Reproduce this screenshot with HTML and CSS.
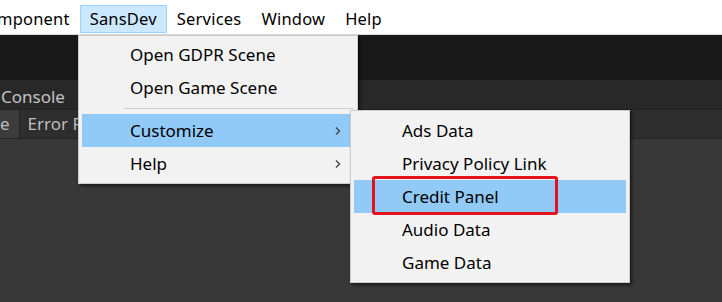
FILE: index.html
```html
<!DOCTYPE html>
<html lang="en">
<head>
    <meta charset="UTF-8">
    <meta name="viewport" content="width=device-width, initial-scale=1.0">
    <title>SansDev menu</title>
    <link rel="stylesheet" href="styles.css">
</head>
<body>
    <div class="menubar">
        <span class="menu-title cut">mponent</span>
        <span class="menu-title open">SansDev</span>
        <span class="menu-title">Services</span>
        <span class="menu-title">Window</span>
        <span class="menu-title">Help</span>
    </div>

    <div class="toolbar"></div>
    <div class="panel-head">
        <span class="panel-name">Console</span>
    </div>
    <div class="tabs">
        <span class="tab active">e</span>
        <span class="tab">Error Pause</span>
    </div>
    <div class="panel-body"></div>

    <!-- SansDev dropdown -->
    <div class="dropdown main-menu">
        <div class="item">Open GDPR Scene</div>
        <div class="item">Open Game Scene</div>
        <div class="separator"></div>
        <div class="item hover">Customize
            <svg class="arrow" width="8" height="10" viewBox="0 0 8 10"><path d="M2 1.5 L5.5 5 L2 8.5" fill="none" stroke="#444" stroke-width="1.4"/></svg>
        </div>
        <div class="item">Help
            <svg class="arrow" width="8" height="10" viewBox="0 0 8 10"><path d="M2 1.5 L5.5 5 L2 8.5" fill="none" stroke="#444" stroke-width="1.4"/></svg>
        </div>
    </div>

    <!-- Customize submenu -->
    <div class="dropdown sub-menu">
        <div class="item">Ads Data</div>
        <div class="item">Privacy Policy Link</div>
        <div class="item hover">Credit Panel</div>
        <div class="item">Audio Data</div>
        <div class="item">Game Data</div>
        <div class="mark"></div>
    </div>
</body>
</html>
```

FILE: styles.css
```css
body {
    margin: 0;
    width: 722px;
    height: 302px;
    overflow: hidden;
    background-color: #383838;
    font-family: "Noto Sans", "Open Sans", sans-serif;
    font-size: 16px;
    position: relative;
}
.menubar {
    height: 34px;
    background-color: #fff;
    border-bottom: 1px solid #dadada;
    display: flex;
    align-items: flex-start;
    gap: 20px;
    font-size: 16.5px;
    letter-spacing: 0.2px;
}
.menu-title {
    color: #000;
    line-height: 28px;
    margin-top: 5px;
}
.menu-title.cut {
    margin-left: -3px;
}
.menu-title.open {
    background-color: #cce8ff;
    border: 1px solid #99d1ff;
    line-height: 26px;
    padding: 0 9px;
    margin: 5px -10px 0 -10px;
}
.toolbar {
    height: 45px;
    background-color: #191919;
}
.panel-head {
    height: 29px;
    background-color: #282828;
    display: flex;
    align-items: center;
}
.panel-name {
    color: #c2c2c2;
    padding-left: 1px;
    padding-top: 4px;
    font-size: 17px;
}
.tabs {
    height: 28px;
    background-color: #2e2e2e;
    border-top: 1px solid #232323;
    border-bottom: 1px solid #232323;
    display: flex;
}
.tab {
    color: #bdbdbd;
    font-size: 17px;
    line-height: 28px;
    padding: 0 9px 0 0;
    border-right: 1px solid #232323;
}
.tab.active {
    background-color: #3c3c3c;
    padding-left: 0;
}
.tab + .tab {
    padding-left: 8px;
}
.panel-body {
    height: 162px;
}
.dropdown {
    position: absolute;
    background-color: #f2f2f2;
    border: 1px solid #cccccc;
    box-shadow: 2px 2px 3px rgba(0, 0, 0, 0.55);
    font-size: 17px;
}
.main-menu {
    left: 78px;
    top: 35px;
    width: 272px;
    padding: 2px 3px 3px 3px;
}
.sub-menu {
    left: 350px;
    top: 110px;
    width: 272px;
    padding: 3px 3px 3px 3px;
}
.item {
    height: 33px;
    line-height: 33px;
    padding-left: 48px;
    color: #000;
    position: relative;
}
.item.hover {
    background-color: #91c9f7;
}
.arrow {
    position: absolute;
    right: 12px;
    top: 12px;
}
.separator {
    height: 1px;
    background-color: #cfcfcf;
    margin: 4px 0 5px 41px;
}
.mark {
    position: absolute;
    left: 21px;
    top: 65px;
    width: 180px;
    height: 33px;
    border: 3px solid #e3121d;
    border-radius: 3px;
}
```
